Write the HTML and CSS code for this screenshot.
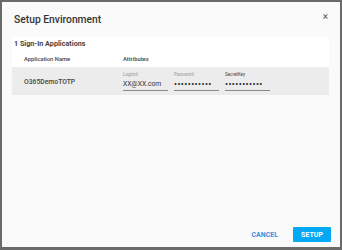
FILE: index.html
```html
<!DOCTYPE html>
<html lang="en">
<head>
    <meta charset="UTF-8">
    <title>Setup Environment</title>
    <link rel="stylesheet" href="styles.css">
</head>
<body>
    <div class="dialog">
        <div class="dialog-header">
            <h1>Setup Environment</h1>
            <span class="close">&times;</span>
        </div>

        <div class="panel">
            <div class="panel-title">1 Sign-In Applications</div>
            <div class="row head">
                <div class="col-name">Application Name</div>
                <div class="col-attr">Attributes</div>
            </div>
            <div class="row app">
                <div class="col-name">O365DemoTOTP</div>
                <div class="col-attr">
                    <div class="field">
                        <label>Loginid</label>
                        <div class="value">XX@XX.com</div>
                    </div>
                    <div class="field">
                        <label>Password</label>
                        <div class="value dots">&bull;&bull;&bull;&bull;&bull;&bull;&bull;&bull;&bull;&bull;&bull;</div>
                    </div>
                    <div class="field">
                        <label class="dark">SecretKey</label>
                        <div class="value dots">&bull;&bull;&bull;&bull;&bull;&bull;&bull;&bull;&bull;&bull;&bull;</div>
                    </div>
                </div>
            </div>
        </div>

        <div class="actions">
            <button class="btn-cancel">CANCEL</button>
            <button class="btn-setup">SETUP</button>
        </div>
    </div>
</body>
</html>
```

FILE: styles.css
```css
html, body { margin: 0; padding: 0; }
body { font-family: Roboto, "Liberation Sans", sans-serif; }
.dialog { width: 342px; height: 250px; box-sizing: border-box; background: #fafafa; border: 2px solid #6a6a6a; border-bottom-width: 3px; display: flex; flex-direction: column; }
.dialog-header { display: flex; justify-content: space-between; align-items: center; padding: 6px 12px 0 12px; height: 22px; }
.dialog-header h1 { margin: 0; font-size: 10.3px; font-weight: 500; color: #333; }
.close { font-size: 10px; color: #555; line-height: 1; margin-top: -5px; }
.panel { margin: 7px 11px 0 10px; background: #fff; }
.panel-title { font-size: 7.2px; font-weight: 700; color: #444; padding-left: 2px; height: 14px; line-height: 14px; }
.row { display: flex; align-items: center; }
.row.head { height: 16px; font-size: 5.8px; font-weight: 500; color: #444; }
.row.app { height: 28px; background: #ececec; }
.col-name { width: 111px; padding-left: 12px; box-sizing: border-box; }
.row.app .col-name { font-size: 6.8px; font-weight: 500; color: #444; padding-top: 1px; }
.col-attr { display: flex; gap: 6px; }
.field { width: 45px; }
.field label { display: block; font-size: 4.5px; color: #999; height: 7px; }
.field label.dark { color: #444; }
.field .value { font-size: 6.8px; color: #333; border-bottom: 1px solid #8a8a8a; height: 11px; line-height: 10px; }
.field .value.dots { font-size: 9px; letter-spacing: 0.4px; color: #222; overflow: hidden; white-space: nowrap; }
.actions { margin-top: auto; display: flex; justify-content: flex-end; align-items: center; gap: 15px; padding: 0 9px 5px 0; }
button { font-family: inherit; font-size: 7px; font-weight: 700; border: none; cursor: pointer; }
.btn-cancel { background: none; color: #3a8fe0; padding: 0; }
.btn-setup { background: #03a9f4; color: #fff; width: 38px; height: 15px; border-radius: 1px; }
```
